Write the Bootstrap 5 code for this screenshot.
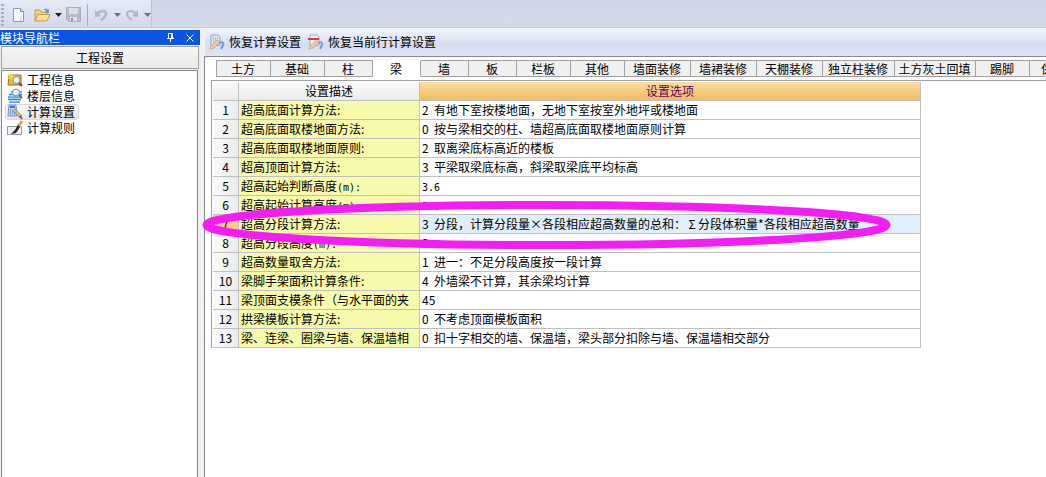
<!DOCTYPE html>
<html lang="zh-CN">
<head>
<meta charset="utf-8">
<meta name="viewport" content="width=device-width, initial-scale=1">
<title>计算设置</title>
<link href="https://cdn.jsdelivr.net/npm/bootstrap@5.3.0/dist/css/bootstrap.min.css" rel="stylesheet">
<style>
body{font:12px/16px "Noto Sans CJK SC",sans-serif;color:#000;background:#f0f0f0;overflow:hidden}
button{border:0;background:none;padding:0;color:inherit;font:inherit}
svg{display:block;flex:none}
.topbar{height:28px;background:linear-gradient(#cfd6e8,#d3daeb);border-bottom:1px solid #c3cadb}
.tools{height:27px;width:152px;background:linear-gradient(#e6eaf6,#d3d9eb);border-right:1px solid #bcc3d6;padding:2px 0 0 1px}
.grip{width:3px;height:22px;background:repeating-linear-gradient(#a6aec4 0 2px,transparent 2px 4px)}
.split-line{width:1px;height:22px;background:#a5abbb;margin:0 7px 0 6px}
.history{gap:6px}
.side{width:200px;padding-top:2px}
.side-title{height:15px;background:#0a55e2;color:#fff;line-height:14px;gap:12px;padding-right:6px}
.side-head{height:23px;background:linear-gradient(#f4f4f4,#ebebeb);border:1px solid #a0a0a0;margin:1px 1px 0}
.side-list{background:#fff;border:1px solid #828790;border-bottom:0;margin:1px 2px 0 1px;padding:1px 0 0 3px}
.side-list a{color:#000;text-decoration:none;height:16px;padding:0 3px 0 1px;border:1px solid transparent;border-radius:3px;gap:4px;line-height:14px}
.side-list a.active{background:linear-gradient(#f8f8f8,#e6e6e6);border-color:#d9d9d9}
.mainbar{height:28px;background:linear-gradient(#f3f5fb,#d6dcf0 60%,#dfe4f5);gap:7px;padding-left:4px;margin-left:1px}
.mainbar button{gap:4px}
.content-col{min-width:0}
.pane{background:#fff;border:1px solid #868a92;border-right:0;border-bottom:0}
.tabs{padding:3px 0 0 11px;overflow:hidden}
.tabs button{flex:none;height:17px;line-height:15px;background:#f0f0f0;border:1px solid #a0a0a0;border-left-width:0;padding-right:1px;text-align:center;white-space:nowrap}
.tabs button:first-child{border-left-width:1px;width:55px}
.tabs button.active{background:#fff;border-top-color:#fff;border-bottom-color:#fff;line-height:13px}
.w48{width:48px}.w54{width:54px}.w66{width:66px}.w72{width:72px}.w81{width:81px}
.sheet-box{border:1px solid #a0a0a0;border-right:0;border-bottom:0;margin:3px 0 0 6px;padding:1px 0 0 1px}
.sheet{table-layout:fixed;width:708px;border-collapse:separate;border-spacing:0}
.sheet .c-no{width:26px}.sheet .c-name{width:181px}
.sheet th,.sheet td{height:19px;line-height:18px;padding:0 2px;border:solid #c0c0c0;border-width:0 1px 1px 0;font-weight:400;white-space:nowrap;overflow:hidden}
.sheet thead th{text-align:center;background:linear-gradient(#fafafa,#ebebeb)}
.sheet thead th.opt{background:linear-gradient(#fbdba5,#f1bd5d);color:#600060}
.sheet tbody th:first-child{text-align:center;background:linear-gradient(90deg,#fafafa,#ebebeb)}
.sheet tbody th+th{background:#f7faaa}
.sheet tr.sel th:first-child{background:#fbcb84}
.sheet tr.sel td{background:#dfeefd}
.no{display:inline-block;width:12px}
.full{display:inline-block;width:12px;text-align:center}
.lat{font:10px/10px "DejaVu Sans Mono",monospace}
.ring{position:absolute;left:-2px;top:171px;pointer-events:none}
</style>
</head>
<body class="vh-100 d-flex flex-column">
<svg width="0" height="0" class="position-absolute">
<defs>
<symbol id="hand" viewBox="0 0 16 16"><path d="M10 9c3-2 5 0 4 2l-2 4" fill="none" stroke="#6f9be0" stroke-width="2"/><path d="M1 15l1-3 6-6 3 2-6 6z" fill="#efc79a" stroke="#b98a68" stroke-width=".5"/></symbol>
</defs>
</svg>
<header class="topbar">
<div class="tools d-flex align-items-center">
<div class="grip"></div>
<button aria-label="新建" class="ms-2"><svg width="14" height="16" viewBox="0 0 14 16"><path d="M1.500 1.500h7l3 3v10h-10z" fill="#fff" stroke="#8c9cb2"/><path d="M8.500 1.500v3h3" fill="#cfdcea" stroke="#7588a0"/><path d="M10 6v8H7z" fill="#d7e5f3"/></svg></button>
<button aria-label="打开" class="d-flex align-items-center ms-2"><svg width="17" height="16" viewBox="0 0 17 16"><path d="M1 14V3h5l1 2h6v3" fill="#f3d27a" stroke="#c09a4c"/><path d="M1 14L4 7.500h12L13 14z" fill="#ffdf90" stroke="#c39a48"/><path d="M9 3c2-2 4-2 5 0l1-1v4h-4l1-1c0-2-1-2-3-2z" fill="#7c92b8"/></svg><svg class="ms-1" width="7" height="4"><path d="M0 0h7L3.500 4z" fill="#222"/></svg></button>
<button aria-label="保存" class="ms-1"><svg width="15" height="15" viewBox="0 0 15 15"><path d="M.5.5h14v14h-12l-2-2z" fill="#b5bbc8" stroke="#aab0be"/><path d="M3 1h9v6H3z" fill="#d9deeb"/><path d="M4 10h7v4H4z" fill="#dce0ea"/><path d="M5 11h2v3H5z" fill="#8f96a6"/></svg></button>
<div class="split-line"></div>
<button aria-label="撤销" class="history d-flex align-items-center"><svg width="13" height="14" viewBox="0 0 13 14"><path d="M2 6c3-4 9-4 9 0 0 3-2 4-5 6" fill="none" stroke="#b0b7c7" stroke-width="2.500"/><path d="M0 2v7l6-1z" fill="#b0b7c7"/></svg><svg width="7" height="4"><path d="M0 0h7L3.500 4z" fill="#6d7280"/></svg></button>
<button aria-label="重做" class="history d-flex align-items-center ms-1"><svg width="13" height="14" viewBox="0 0 13 14"><path d="M11 6C8 2 2 2 2 6c0 3 2 4 5 6" fill="none" stroke="#b0b7c7" stroke-width="2"/><path d="M13 2v7l-6-1z" fill="#b0b7c7"/></svg><svg width="7" height="4"><path d="M0 0h7L3.500 4z" fill="#6d7280"/></svg></button>
</div>
</header>
<div class="d-flex flex-grow-1">
<aside class="side d-flex flex-column flex-shrink-0">
<div class="side-title d-flex align-items-center"><span class="me-auto">模块导航栏</span>
<button aria-label="固定"><svg width="7" height="9" viewBox="0 0 7 9"><path d="M1.500 5V.5h4V5M0 5.500h7M3.500 6v3M4.500 1v4" fill="none" stroke="#fff"/></svg></button>
<button aria-label="关闭"><svg width="8" height="8" viewBox="0 0 8 8"><path d="M.5.5l7 7M7.500.5l-7 7" stroke="#fff"/></svg></button></div>
<button class="side-head">工程设置</button>
<nav class="side-list flex-grow-1 d-flex flex-column align-items-start">
<a href="#" class="d-flex align-items-center"><svg width="16" height="16" viewBox="0 0 16 16"><path d="M2 3h12v10H1z" fill="#e9b84b" stroke="#9d6d20"/><path d="M4 0v8M0 4h8M1 1l6 6M7 1L1 7" stroke="#ffdf40"/><circle cx="9.500" cy="8" r="3.500" fill="#e4f2fb" stroke="#7c98b5"/><path d="M12 11l3 3" stroke="#704824" stroke-width="2"/></svg>工程信息</a>
<a href="#" class="d-flex align-items-center"><svg width="16" height="16" viewBox="0 0 16 16"><path d="M4 4h11M2 6.500h13M1 9h13M1 11.500h13M2 14h11" stroke="#2b86cf" stroke-width="1.500"/><path d="M3 5h12M2 8h12M1 10.500h13M2 13h11" stroke="#a5d7f5"/><circle cx="9" cy="4.500" r="3.500" fill="#e3f1fa" stroke="#718faa"/><path d="M12 7l3 3" stroke="#986035" stroke-width="2"/></svg>楼层信息</a>
<a href="#" class="active d-flex align-items-center"><svg width="16" height="16" viewBox="0 0 16 16"><path d="M2 1h7l1 11H1z" fill="#b9cff2" stroke="#7795d2"/><path d="M3 3h5" stroke="#4d70c6" stroke-width="2"/><path d="M3 6h5M3 8h5M3 10h5" stroke="#5c7dcc" stroke-dasharray="1 1"/><path d="M7 6l7 7" stroke="#5b5540" stroke-width="3"/><path d="M7 6l6 6" stroke="#e9ca72" stroke-width="2"/><path d="M13 12l2 3" stroke="#bc5045" stroke-width="2"/></svg>计算设置</a>
<a href="#" class="d-flex align-items-center"><svg width="16" height="16" viewBox="0 0 16 16"><path d="M.5 6.500h14v8H.5z" fill="#edf1f5" stroke="#8b98a7"/><path d="M15 1l-5 7" stroke="#d6a957" stroke-width="3"/><path d="M11 5l2 2-4 6-5 1 4-4z" fill="#222"/></svg>计算规则</a>
</nav>
</aside>
<main class="content-col flex-grow-1 d-flex flex-column position-relative ms-1">
<div class="mainbar d-flex align-items-center">
<button class="d-flex align-items-center"><svg width="16" height="16" viewBox="0 0 16 16"><path d="M2 1h7l2 2v8l-9 1z" fill="#dce8f6" stroke="#8fa6c6"/><path d="M4 4h5M4 6h5M4 8h5" stroke="#7c9bc8" stroke-dasharray="1 1"/><use href="#hand"/></svg>恢复计算设置</button>
<button class="d-flex align-items-center"><svg width="16" height="16" viewBox="0 0 16 16"><path d="M2 1h7l2 2v8l-9 1z" fill="#f2f5fa" stroke="#9aa8bb"/><path d="M0 5h11" stroke="#e33" stroke-width="2"/><use href="#hand"/></svg>恢复当前行计算设置</button>
</div>
<section class="pane flex-grow-1">
<div class="tabs d-flex" role="tablist">
<button role="tab">土方</button><button role="tab" class="w54">基础</button><button role="tab" class="w48">柱</button><button role="tab" class="w48 active">梁</button><button role="tab" class="w48">墙</button><button role="tab" class="w48">板</button><button role="tab" class="w54">栏板</button><button role="tab" class="w54">其他</button><button role="tab" class="w66">墙面装修</button><button role="tab" class="w66">墙裙装修</button><button role="tab" class="w66">天棚装修</button><button role="tab" class="w72">独立柱装修</button><button role="tab" class="w81">土方灰土回填</button><button role="tab" class="w54">踢脚</button><button role="tab" class="w48">保温</button>
</div>
<div class="sheet-box">
<table class="sheet">
<colgroup><col class="c-no"><col class="c-name"><col></colgroup>
<thead><tr><th></th><th>设置描述</th><th class="opt">设置选项</th></tr></thead>
<tbody>
<tr><th>1</th><th>超高底面计算方法:</th><td><span class="no">2</span>有地下室按楼地面，无地下室按室外地坪或楼地面</td></tr>
<tr><th>2</th><th>超高底面取楼地面方法:</th><td><span class="no">0</span>按与梁相交的柱、墙超高底面取楼地面原则计算</td></tr>
<tr><th>3</th><th>超高底面取楼地面原则:</th><td><span class="no">2</span>取离梁底标高近的楼板</td></tr>
<tr><th>4</th><th>超高顶面计算方法:</th><td><span class="no">3</span>平梁取梁底标高，斜梁取梁底平均标高</td></tr>
<tr><th>5</th><th>超高起始判断高度<span class="lat">(m):</span></th><td><span class="lat">3.6</span></td></tr>
<tr><th>6</th><th>超高起始计算高度<span class="lat">(m):</span></th><td><span class="lat">3.6</span></td></tr>
<tr class="sel"><th>7</th><th>超高分段计算方法:</th><td><span class="no">3</span>分段，计算分段量<span class="full">×</span>各段相应超高数量的总和：<span class="full">Σ</span>分段体积量*各段相应超高数量</td></tr>
<tr><th>8</th><th>超高分段高度<span class="lat">(m):</span></th><td>3</td></tr>
<tr><th>9</th><th>超高数量取舍方法:</th><td><span class="no">1</span>进一：不足分段高度按一段计算</td></tr>
<tr><th>10</th><th>梁脚手架面积计算条件:</th><td><span class="no">4</span>外墙梁不计算，其余梁均计算</td></tr>
<tr><th>11</th><th>梁顶面支模条件（与水平面的夹</th><td>45</td></tr>
<tr><th>12</th><th>拱梁模板计算方法:</th><td><span class="no">0</span>不考虑顶面模板面积</td></tr>
<tr><th>13</th><th>梁、连梁、圈梁与墙、保温墙相</th><td><span class="no">0</span>扣十字相交的墙、保温墙，梁头部分扣除与墙、保温墙相交部分</td></tr>
</tbody>
</table>
</div>
</section>
<svg class="ring" width="690" height="52" viewBox="0 0 690 52"><ellipse cx="344.500" cy="26" rx="340" ry="20" fill="none" stroke="#f51cf5" stroke-width="8"/></svg>
</main>
</div>
<script src="https://cdn.jsdelivr.net/npm/bootstrap@5.3.0/dist/js/bootstrap.bundle.min.js"></script>
</body>
</html>
